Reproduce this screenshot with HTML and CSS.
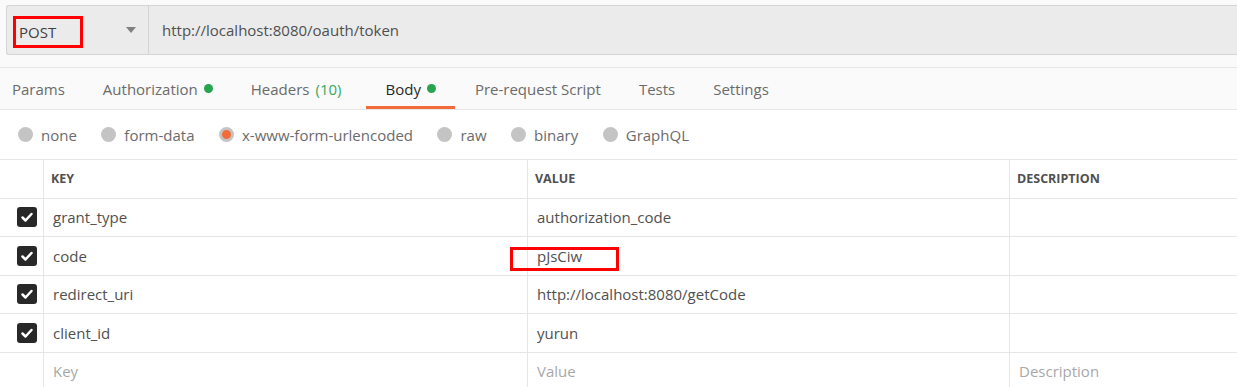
FILE: index.html
```html
<!DOCTYPE html>
<html lang="en">
<head>
  <meta charset="UTF-8" />
  <title>Request</title>
  <link rel="stylesheet" href="styles.css">
</head>
<body>
  <div class="top">
    <div class="request-bar">
      <div class="method">
        <span class="method-name">POST</span>
        <span class="caret"></span>
      </div>
      <div class="url">http://localhost:8080/oauth/token</div>
    </div>
  </div>

  <div class="tabs">
    <div class="tab">Params</div>
    <div class="tab">Authorization <span class="dot"></span></div>
    <div class="tab">Headers <span class="count">(10)</span></div>
    <div class="tab active">Body <span class="dot"></span></div>
    <div class="tab">Pre-request Script</div>
    <div class="tab">Tests</div>
    <div class="tab">Settings</div>
  </div>

  <div class="body-types">
    <label class="radio"><span class="circle"></span>none</label>
    <label class="radio"><span class="circle"></span>form-data</label>
    <label class="radio"><span class="circle checked"></span>x-www-form-urlencoded</label>
    <label class="radio"><span class="circle"></span>raw</label>
    <label class="radio"><span class="circle"></span>binary</label>
    <label class="radio"><span class="circle"></span>GraphQL</label>
  </div>

  <div class="params">
    <div class="row head">
      <div class="cell check"></div>
      <div class="cell">KEY</div>
      <div class="cell">VALUE</div>
      <div class="cell">DESCRIPTION</div>
    </div>
    <div class="row">
      <div class="cell check"><span class="box"><svg viewBox="0 0 20 20"><path d="M5.5 10.5l3 3 6-6.5" /></svg></span></div>
      <div class="cell">grant_type</div>
      <div class="cell">authorization_code</div>
      <div class="cell"></div>
    </div>
    <div class="row">
      <div class="cell check"><span class="box"><svg viewBox="0 0 20 20"><path d="M5.5 10.5l3 3 6-6.5" /></svg></span></div>
      <div class="cell">code</div>
      <div class="cell"><span class="mark">pJsCiw</span></div>
      <div class="cell"></div>
    </div>
    <div class="row">
      <div class="cell check"><span class="box"><svg viewBox="0 0 20 20"><path d="M5.5 10.5l3 3 6-6.5" /></svg></span></div>
      <div class="cell">redirect_uri</div>
      <div class="cell">http://localhost:8080/getCode</div>
      <div class="cell"></div>
    </div>
    <div class="row">
      <div class="cell check"><span class="box"><svg viewBox="0 0 20 20"><path d="M5.5 10.5l3 3 6-6.5" /></svg></span></div>
      <div class="cell">client_id</div>
      <div class="cell">yurun</div>
      <div class="cell"></div>
    </div>
    <div class="row placeholder">
      <div class="cell check"></div>
      <div class="cell">Key</div>
      <div class="cell">Value</div>
      <div class="cell">Description</div>
    </div>
  </div>
</body>
</html>
```

FILE: styles.css
```css
/* Base */
body {
  margin: 0;
  background: #fff;
  color: #505050;
  font-family: "Open Sans", sans-serif;
  font-size: 15px;
  overflow: hidden;
}

/* Request bar */
.top {
  background: #fafafa;
  padding: 5px 0 12px 6px;
}
.request-bar {
  display: flex;
  height: 48px;
  background: #ebebeb;
  border: 1px solid #d4d4d4;
  border-right: none;
  border-radius: 3px 0 0 3px;
}
.method {
  width: 142px;
  display: flex;
  align-items: center;
  justify-content: space-between;
  padding: 0 12px 0 6px;
  box-sizing: border-box;
  border-right: 1px solid #d4d4d4;
}
.method-name {
  align-self: flex-start;
  margin-top: 10px;
  border: 3px solid #f00;
  width: 61px;
  height: 26px;
  line-height: 26px;
  padding-left: 3px;
  color: #404040;
}
.caret {
  width: 0;
  height: 0;
  border-left: 5px solid transparent;
  border-right: 5px solid transparent;
  border-top: 6px solid #808080;
}
.url {
  padding-left: 13px;
  line-height: 48px;
}

/* Tabs */
.tabs {
  display: flex;
  height: 41px;
  background: #fafafa;
  border-top: 1px solid #e6e6e6;
  border-bottom: 1px solid #e6e6e6;
  padding-left: 12px;
}
.tab {
  display: flex;
  align-items: center;
  gap: 6px;
  margin-right: 38px;
  color: #6b6b6b;
}
.tab.active {
  color: #282828;
  padding: 0 19px;
  margin-left: -13px;
  margin-right: 20px;
  box-shadow: inset 0 -3px 0 #f26b3a;
}
.dot {
  width: 9px;
  height: 9px;
  border-radius: 50%;
  background: #26a44e;
}
.count {
  color: #3aa95b;
}

/* Body types */
.body-types {
  display: flex;
  align-items: center;
  height: 49px;
  padding-left: 18px;
  color: #6b6b6b;
}
.radio {
  display: flex;
  align-items: center;
  margin-right: 24.5px;
}
.circle {
  width: 15px;
  height: 15px;
  border-radius: 50%;
  background: #c4c4c4;
  margin-right: 8px;
  box-sizing: border-box;
}
.circle.checked {
  background: #f26b3a;
  border: 3px solid #c4c4c4;
}

/* Params table */
.params {
  border-top: 1px solid #e6e6e6;
}
.row {
  display: grid;
  grid-template-columns: 43px 484px 482px 1fr;
  height: 38.5px;
  box-sizing: border-box;
  border-bottom: 1px solid #e6e6e6;
}
.cell {
  display: flex;
  align-items: center;
  padding-left: 9px;
  border-left: 1px solid #e6e6e6;
}
.cell:first-child {
  border-left: none;
}
.row.head .cell {
  padding-left: 7px;
  font-size: 12.5px;
  font-weight: 700;
  color: #505050;
}
.row.placeholder .cell {
  color: #a8a8a8;
}
.cell.check {
  justify-content: center;
  padding-left: 0;
}
.box {
  width: 20px;
  height: 20px;
  border-radius: 3px;
  background: #282828;
  margin-left: 11px;
}
.box svg {
  width: 20px;
  height: 20px;
  fill: none;
  stroke: #fff;
  stroke-width: 2.5;
  stroke-linecap: round;
  stroke-linejoin: round;
}
.mark {
  position: relative;
}
.mark::before {
  content: "";
  position: absolute;
  left: -27px;
  top: 1px;
  width: 103px;
  height: 18px;
  border: 3px solid #f00;
}
```
